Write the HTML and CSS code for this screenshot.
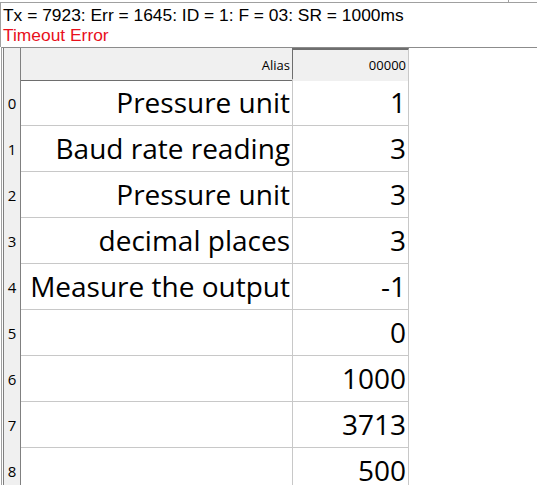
FILE: index.html
```html
<!DOCTYPE html>
<html lang="en">
<head>
<meta charset="UTF-8">
<meta name="viewport" content="width=device-width, initial-scale=1.0">
<title>Modbus Monitor</title>
<link rel="stylesheet" href="styles.css">
</head>
<body>
<div class="topbar"></div>
<div class="status">
  <div class="status-line">Tx = 7923: Err = 1645: ID = 1: F = 03: SR = 1000ms</div>
  <div class="status-line error">Timeout Error</div>
</div>
<div class="grid">
  <div class="row head">
    <div class="fixed"></div>
    <div class="alias-head">Alias</div>
    <div class="value-head">00000</div>
  </div>
  <div class="row">
    <div class="fixed">0</div>
    <div class="alias">Pressure unit</div>
    <div class="value">1</div>
  </div>
  <div class="row">
    <div class="fixed">1</div>
    <div class="alias">Baud rate reading</div>
    <div class="value">3</div>
  </div>
  <div class="row">
    <div class="fixed">2</div>
    <div class="alias">Pressure unit</div>
    <div class="value">3</div>
  </div>
  <div class="row">
    <div class="fixed">3</div>
    <div class="alias">decimal places</div>
    <div class="value">3</div>
  </div>
  <div class="row">
    <div class="fixed">4</div>
    <div class="alias">Measure the output</div>
    <div class="value">-1</div>
  </div>
  <div class="row">
    <div class="fixed">5</div>
    <div class="alias"></div>
    <div class="value">0</div>
  </div>
  <div class="row">
    <div class="fixed">6</div>
    <div class="alias"></div>
    <div class="value">1000</div>
  </div>
  <div class="row">
    <div class="fixed">7</div>
    <div class="alias"></div>
    <div class="value">3713</div>
  </div>
  <div class="row">
    <div class="fixed">8</div>
    <div class="alias"></div>
    <div class="value">500</div>
  </div>
</div>
</body>
</html>
```

FILE: styles.css
```css
body {
  margin: 0;
  background-color: #fff;
  font-family: "Liberation Sans", Arial, sans-serif;
  overflow: hidden;
}
.topbar {
  height: 2px;
  width: 508px;
  border-right: 1px solid #a0a0a0;
}
.status {
  border-top: 1px solid #a0a0a0;
  border-left: 1px solid #a0a0a0;
  padding: 2px 0 1px 2px;
  height: 41px;
}
.status-line {
  font-size: 17.4px;
  line-height: 20px;
  color: #000;
  white-space: nowrap;
}
.error {
  color: #e8101c;
}
.grid {
  border-top: 1px solid #8c8c8c;
  border-left: 1px solid #a0a0a0;
  margin-left: 1px;
  padding-left: 1px;
}
.row {
  display: grid;
  grid-template-columns: 18px 272px 116px;
  height: 46px;
  font-family: "Open Sans", "Noto Sans", sans-serif;
}
.row.head {
  height: 31px;
}
.fixed {
  background-color: #f0f0f0;
  border-left: 1px solid #808080;
  border-right: 1px solid #808080;
  border-bottom: 1px solid #808080;
  font-size: 15px;
  color: #000;
  display: flex;
  align-items: center;
  justify-content: center;
  padding-top: 2px;
}
.alias-head,
.value-head {
  background-color: #f0f0f0;
  font-size: 13px;
  color: #000;
  text-align: right;
  line-height: 30px;
  padding-top: 2px;
}
.alias-head {
  border-right: 1px solid #6e6e6e;
  border-bottom: 1px solid #6e6e6e;
  padding-right: 2px;
}
.value-head {
  border-top: 2px solid #6e6e6e;
  border-left: 1px solid #6e6e6e;
  border-right: 1px solid #c8c8c8;
  margin-left: -1px;
  padding-right: 2px;
  line-height: 26px;
}
.alias,
.value {
  font-size: 28px;
  color: #000;
  text-align: right;
  line-height: 45px;
  padding-top: 1px;
  padding-right: 2px;
  border-bottom: 1px solid #c8c8c8;
  white-space: nowrap;
}
.alias {
  border-right: 1px solid #c8c8c8;
}
.value {
  border-right: 1px solid #c8c8c8;
}
```
